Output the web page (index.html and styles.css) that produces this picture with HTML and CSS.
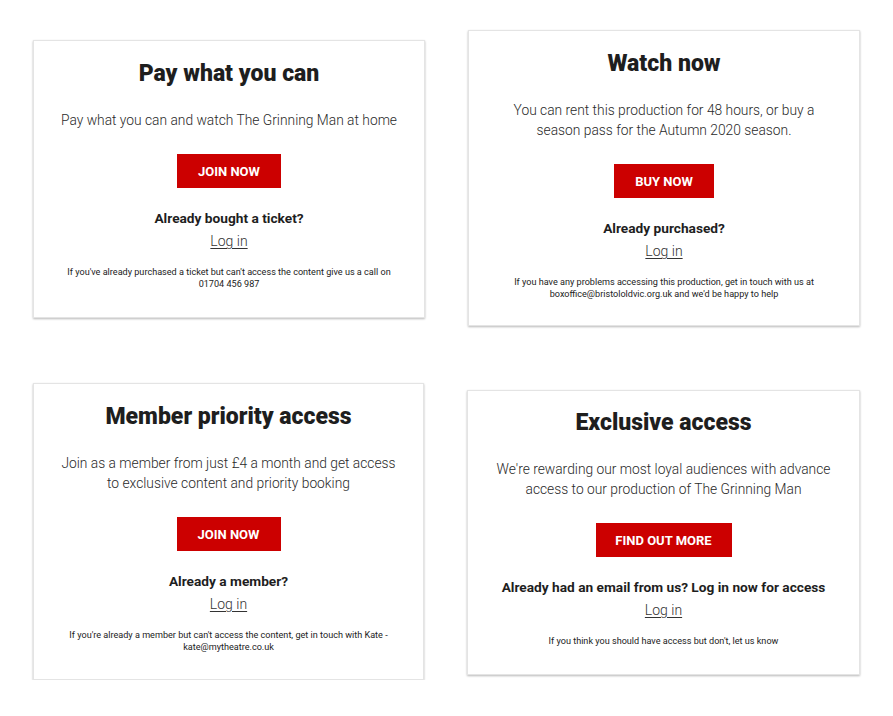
FILE: index.html
```html
<!DOCTYPE html>
<html lang="en">
<head>
<meta charset="utf-8">
<title>Access cards</title>
<link rel="stylesheet" href="styles.css">
</head>
<body>
<div class="board">
  <div class="col col-left">
    <section class="card">
      <h2 class="card-title">Pay what you can</h2>
      <p class="card-lead">Pay what you can and watch The Grinning Man at home</p>
      <a class="btn btn-join1">JOIN NOW</a>
      <p class="card-q">Already bought a ticket?</p>
      <a class="card-login">Log in</a>
      <p class="card-note">If you've already purchased a ticket but can't access the content give us a call on<br>01704 456 987</p>
    </section>
    <section class="card card-third">
      <h2 class="card-title">Member priority access</h2>
      <p class="card-lead">Join as a member from just £4 a month and get access<br>to exclusive content and priority booking</p>
      <a class="btn btn-join2">JOIN NOW</a>
      <p class="card-q">Already a member?</p>
      <a class="card-login">Log in</a>
      <p class="card-note">If you're already a member but can't access the content, get in touch with Kate -<br>kate@mytheatre.co.uk</p>
    </section>
  </div>
  <div class="col col-right">
    <section class="card card-second">
      <h2 class="card-title">Watch now</h2>
      <p class="card-lead">You can rent this production for 48 hours, or buy a<br>season pass for the Autumn 2020 season.</p>
      <a class="btn btn-buy">BUY NOW</a>
      <p class="card-q">Already purchased?</p>
      <a class="card-login">Log in</a>
      <p class="card-note">If you have any problems accessing this production, get in touch with us at<br>boxoffice@bristololdvic.org.uk and we'd be happy to help</p>
    </section>
    <section class="card card-fourth">
      <h2 class="card-title">Exclusive access</h2>
      <p class="card-lead">We're rewarding our most loyal audiences with advance<br>access to our production of The Grinning Man</p>
      <a class="btn btn-find">FIND OUT MORE</a>
      <p class="card-q">Already had an email from us? Log in now for access</p>
      <a class="card-login">Log in</a>
      <p class="card-note">If you think you should have access but don't, let us know</p>
    </section>
  </div>
</div>
</body>
</html>
```
FILE: styles.css
```css
* { box-sizing: border-box; }
html, body {
  margin: 0;
  padding: 0;
  background: #ffffff;
}
body {
  font-family: Roboto, "Liberation Sans", Arial, sans-serif;
  color: #222222;
}
.board {
  display: flex;
  gap: 42px;
  padding-left: 33px;
}
.col {
  display: flex;
  flex-direction: column;
  width: 392px;
}
.col-left { padding-top: 40px; gap: 65px; }
.col-right { padding-top: 30px; gap: 64px; margin-left: 1px; }

.card {
  display: flex;
  flex-direction: column;
  align-items: center;
  text-align: center;
  background: #ffffff;
  border: 1px solid #e4e4e4;
  box-shadow: 0 1px 2px rgba(0, 0, 0, 0.28);
  padding: 18px 10px 27px;
}
.card-second { padding-bottom: 25px; }
.card-third { width: 391px; padding-top: 18px; padding-bottom: 26px; }
.card-fourth { margin-left: -1px; padding-top: 17px; }

.card-title {
  margin: 0;
  font-size: 23px;
  line-height: 30px;
  font-weight: 900;
  color: #1e1e1e;
}
.card-lead {
  margin: 21px 0 0;
  font-size: 13.8px;
  line-height: 20px;
  font-weight: 300;
  color: #2a2a2a;
}
.btn {
  margin-top: 24px;
  display: flex;
  align-items: center;
  justify-content: center;
  height: 34px;
  background: #cc0000;
  color: #ffffff;
  font-size: 13px;
  font-weight: 700;
  text-decoration: none;
}
.btn-join1 { width: 104px; }
.btn-join2 { width: 104px; }
.btn-buy { width: 100px; }
.btn-find { width: 136px; }
.card-q {
  margin: 20px 0 0;
  font-size: 13.7px;
  line-height: 20px;
  font-weight: 700;
  color: #1e1e1e;
}
.card-login {
  margin-top: 2px;
  font-size: 14px;
  line-height: 22px;
  font-weight: 300;
  color: #333333;
  text-decoration: underline;
  text-underline-offset: 2px;
  text-decoration-thickness: 1px;
}
.card-note {
  margin: 14px 0 0;
  font-size: 9.1px;
  line-height: 12px;
  font-weight: 400;
  color: #222222;
}
```
